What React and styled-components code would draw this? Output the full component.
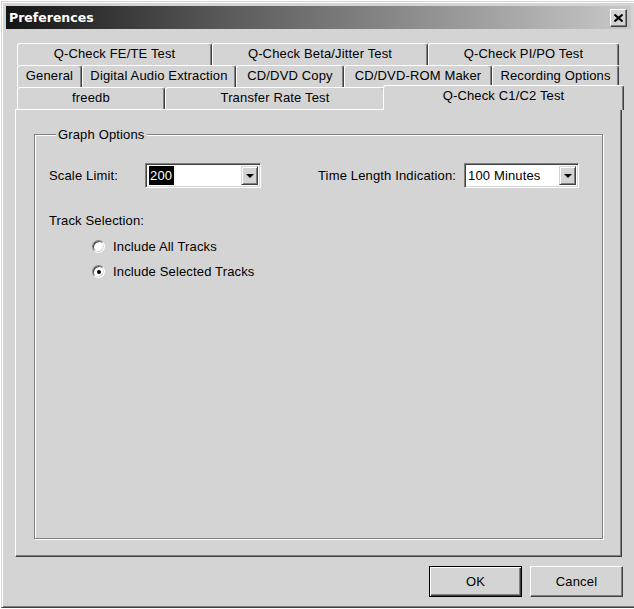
import styled, { createGlobalStyle } from 'styled-components'

const GlobalStyle = createGlobalStyle`
  html, body {
    margin: 0;
    padding: 0;
    overflow: hidden;
    background: #ffffff;
  }
  body {
    font-family: "Liberation Sans", Arial, sans-serif;
    font-size: 13px;
    letter-spacing: 0.15px;
    color: #000;
  }
`

const backRows = [
  [
    ['Q-Check FE/TE Test', 195],
    ['Q-Check Beta/Jitter Test', 216],
    ['Q-Check PI/PO Test', 191],
  ],
  [
    ['General', 65],
    ['Digital Audio Extraction', 154],
    ['CD/DVD Copy', 108],
    ['CD/DVD-ROM Maker', 148],
    ['Recording Options', 127],
  ],
]

function App() {
  return (
    <>
      <GlobalStyle />
      <Window>
        <TitleBar>
          <Title>Preferences</Title>
          <CloseButton>
            <svg width="9" height="8" viewBox="0 0 9 8">
              <path d="M0.5 0.5 L8.5 7.5 M8.5 0.5 L0.5 7.5" stroke="#000" strokeWidth="2" />
            </svg>
          </CloseButton>
        </TitleBar>

        <Content>
          {backRows.map((row, i) => (
            <TabRow key={i}>
              {row.map(([label, w]) => (
                <Tab key={label} $w={w}>{label}</Tab>
              ))}
            </TabRow>
          ))}
          <TabRow>
            <Tab $w={148}>freedb</Tab>
            <Tab $w={220}>Transfer Rate Test</Tab>
            <Tab $w={237} $active>Q-Check C1/C2 Test</Tab>
          </TabRow>

          <Panel>
            <GroupBox>
              <Legend>Graph Options</Legend>
              <Row>
                <Label $w={96}>Scale Limit:</Label>
                <Combo $w={116}>
                  <Field><Selected>200</Selected></Field>
                  <DropButton><Arrow /></DropButton>
                </Combo>
                <Label $w={146} $gap={57}>Time Length Indication:</Label>
                <Combo $w={115}>
                  <Field>100 Minutes</Field>
                  <DropButton><Arrow /></DropButton>
                </Combo>
              </Row>

              <SectionLabel>Track Selection:</SectionLabel>
              <RadioList>
                <RadioRow>
                  <Radio />
                  <span>Include All Tracks</span>
                </RadioRow>
                <RadioRow>
                  <Radio $checked />
                  <span>Include Selected Tracks</span>
                </RadioRow>
              </RadioList>
            </GroupBox>
          </Panel>

          <ButtonRow>
            <Button $default>OK</Button>
            <Button>Cancel</Button>
          </ButtonRow>
        </Content>
      </Window>
    </>
  )
}

export default App

const Window = styled.div`
  margin: 1px 0 0 1px;
  width: 640px;
  height: 607px;
  box-sizing: border-box;
  background: #d4d4d4;
  border: 1px solid;
  border-color: #d4d4d4 #404040 #404040 #d4d4d4;
  box-shadow: inset 1px 1px #ffffff, inset -1px -1px #808080;
  padding: 4px 0 0 4px;
`

const TitleBar = styled.div`
  width: 625px;
  height: 23px;
  display: flex;
  align-items: center;
  justify-content: space-between;
  background: linear-gradient(to right, #141414 0%, #5a5a5a 35%, #c8c8c8 100%);
`

const Title = styled.span`
  padding-left: 3px;
  color: #ffffff;
  font-family: "DejaVu Sans", Verdana, sans-serif;
  font-weight: bold;
  font-size: 12.5px;
  letter-spacing: 0;
`

const CloseButton = styled.div`
  width: 17px;
  height: 18px;
  margin-right: 4px;
  box-sizing: border-box;
  display: flex;
  align-items: center;
  justify-content: center;
  background: #d4d4d4;
  border: 1px solid;
  border-color: #ffffff #404040 #404040 #ffffff;
  box-shadow: inset -1px -1px #808080;
`

const Content = styled.div`
  width: 608px;
  margin: 14px 0 0 9px;
`

const TabRow = styled.div`
  display: flex;
  height: 22px;
  padding-left: 2px;
`

const Tab = styled.div`
  width: ${p => p.$w}px;
  height: 22px;
  flex: none;
  box-sizing: border-box;
  border-top: 1px solid #ffffff;
  border-left: 1px solid #ffffff;
  border-right: 1px solid #404040;
  border-radius: 3px 3px 0 0;
  box-shadow: inset -1px 0 #808080;
  background: #d4d4d4;
  line-height: 20px;
  text-align: center;
  white-space: nowrap;
  overflow: hidden;
  ${p => p.$active && `
    position: relative;
    z-index: 1;
    width: ${p.$w + 4}px;
    height: 25px;
    margin: -2px -2px -1px -2px;
  `}
`

const Panel = styled.div`
  width: 607px;
  height: 448px;
  box-sizing: border-box;
  display: flex;
  flex-direction: column;
  border: 1px solid;
  border-color: #ffffff #404040 #404040 #ffffff;
  box-shadow: inset -1px -1px #808080;
  padding: 17px 18px 17px 18px;
`

const GroupBox = styled.fieldset`
  flex: 1;
  margin: 0;
  padding: 0 0 0 14px;
  min-width: 0;
  border: 1px solid #808080;
  box-shadow: inset 1px 1px #ffffff, 1px 1px #ffffff;
`

const Legend = styled.legend`
  margin-left: 7px;
  padding: 0 2px;
  line-height: 15px;
  background: #d4d4d4;
`

const Row = styled.div`
  display: flex;
  align-items: center;
  height: 25px;
  margin-top: 21px;
`

const Label = styled.span`
  width: ${p => p.$w}px;
  margin-left: ${p => p.$gap || 0}px;
  flex: none;
  white-space: nowrap;
`

const Combo = styled.div`
  width: ${p => p.$w}px;
  height: 25px;
  flex: none;
  box-sizing: border-box;
  display: flex;
  align-items: center;
  background: #ffffff;
  border: 1px solid;
  border-color: #808080 #ffffff #ffffff #808080;
  box-shadow: inset 1px 1px #404040, inset -1px -1px #d4d4d4;
  padding: 2px 2px 2px 3px;
`

const Field = styled.div`
  flex: 1;
  height: 19px;
  line-height: 19px;
  white-space: nowrap;
`

const Selected = styled.span`
  display: inline-block;
  background: #000000;
  color: #ffffff;
  padding: 0 2px 0 1px;
`

const DropButton = styled.div`
  width: 17px;
  height: 19px;
  flex: none;
  box-sizing: border-box;
  display: flex;
  align-items: center;
  justify-content: center;
  background: #d4d4d4;
  border: 1px solid;
  border-color: #d4d4d4 #404040 #404040 #d4d4d4;
  box-shadow: inset 1px 1px #ffffff, inset -1px -1px #808080;
`

const Arrow = styled.div`
  width: 0;
  height: 0;
  border-left: 4px solid transparent;
  border-right: 4px solid transparent;
  border-top: 4px solid #000000;
`

const SectionLabel = styled.div`
  margin-top: 25px;
  line-height: 15px;
`

const RadioList = styled.div`
  display: flex;
  flex-direction: column;
  gap: 10px;
  margin-top: 11px;
  padding-left: 43px;
`

const RadioRow = styled.div`
  display: flex;
  align-items: center;
  gap: 8px;
  line-height: 15px;
`

const Radio = styled.span`
  width: 13px;
  height: 13px;
  box-sizing: border-box;
  border-radius: 50%;
  display: flex;
  align-items: center;
  justify-content: center;
  background: #ffffff;
  border: 1px solid;
  border-color: #808080 #ffffff #ffffff #808080;
  box-shadow: inset 1px 1px #404040, inset -1px -1px #d4d4d4;
  &::after {
    content: '';
    width: 4px;
    height: 4px;
    border-radius: 50%;
    background: ${p => (p.$checked ? '#000000' : 'transparent')};
  }
`

const ButtonRow = styled.div`
  display: flex;
  justify-content: flex-end;
  gap: 8px;
  margin-top: 9px;
`

const Button = styled.div`
  width: 93px;
  height: 31px;
  box-sizing: border-box;
  display: flex;
  align-items: center;
  justify-content: center;
  background: #d4d4d4;
  border: 1px solid;
  border-color: ${p => (p.$default ? '#000000' : '#ffffff #404040 #404040 #ffffff')};
  box-shadow: ${p =>
    p.$default
      ? 'inset 1px 1px #ffffff, inset -1px -1px #404040, inset -2px -2px #808080'
      : 'inset -1px -1px #808080'};
`
